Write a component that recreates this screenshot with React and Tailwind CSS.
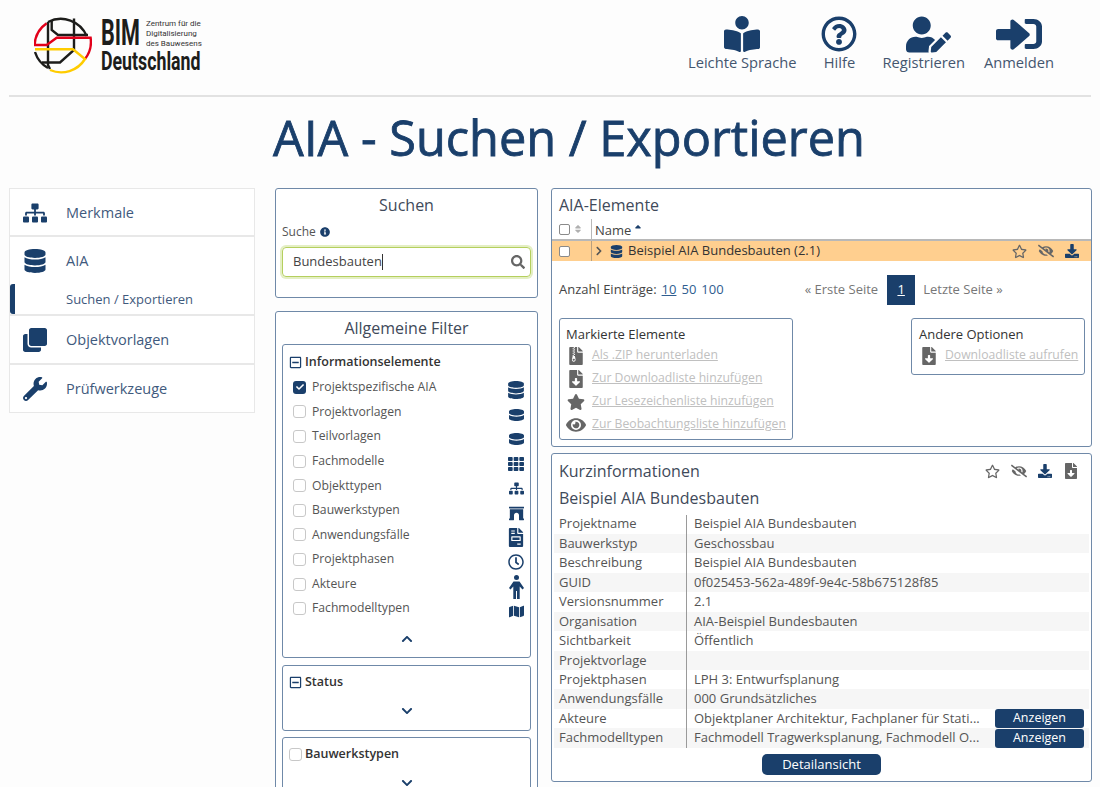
import {
  FaBookReader, FaRegQuestionCircle, FaUserEdit, FaSignInAlt, FaSitemap, FaDatabase, FaClone, FaWrench,
  FaSearch, FaInfoCircle, FaRegStar, FaEyeSlash, FaDownload, FaFileDownload, FaFileArchive, FaStar, FaEye,
  FaTh, FaArchway, FaFileInvoice, FaRegClock, FaMap, FaChevronUp, FaChevronDown, FaChevronRight,
  FaSortUp, FaSort, FaCheck, FaRegMinusSquare,
} from "react-icons/fa";

const navy = "text-[#1a3f6b]";

function ShortDb() {
  return (
    <svg viewBox="0 0 448 352" className={`w-[15px] h-[12px] ${navy}`} fill="currentColor">
      <path d="M448 73.143v45.714C448 159.143 347.667 192 224 192S0 159.143 0 118.857V73.143C0 32.857 100.333 0 224 0s224 32.857 224 73.143zM448 176v102.857C448 319.143 347.667 352 224 352S0 319.143 0 278.857V176c48.125 33.143 136.208 48.572 224 48.572S399.874 209.143 448 176z" />
    </svg>
  );
}

function Person() {
  return (
    <svg viewBox="0 0 15 24" className={`w-[15px] h-[24px] shrink-0 ${navy}`} fill="currentColor">
      <circle cx="7.5" cy="2.5" r="2.5" />
      <path d="M4.5 6.5 L10.5 6.5 L15 13 L13.5 14.5 L10.7 11.5 L10.7 24 L8 24 L8 16 L7 16 L7 24 L4.3 24 L4.3 11.5 L1.5 14.5 L0 13 Z" />
    </svg>
  );
}

function Logo() {
  return (
    <div className="flex items-start">
      <svg width="58" height="58" viewBox="0 0 58 58" fill="none" strokeWidth="2.4" className="shrink-0">
        <path d="M14 5 A28 28 0 0 1 52.7 19" stroke="#1d1d1b" />
        <path d="M14 5 L14 48 L16 52" stroke="#1d1d1b" />
        <path d="M17.7 3 L17.7 13 L24 18 L54 18" stroke="#1d1d1b" />
        <path d="M40 1.5 L40 33 L26 45.5 L8 45.5" stroke="#1d1d1b" />
        <path d="M1 35 A28 28 0 0 0 14 51" stroke="#1d1d1b" />
        <path d="M12.7 6.3 A28 28 0 0 0 0.6 28 L12.7 28 L22.7 20.7 L56.6 20.7 A28 28 0 0 1 51 42" stroke="#e2001a" />
        <path d="M1 32.3 L39 32.3 L51 42 A28 28 0 0 1 16 53" stroke="#ffcc00" />
      </svg>
      <div className="ml-[9px] mt-[1px] text-[#1d1d1b] [font-family:'Roboto',sans-serif]">
        <div className="flex items-start h-[33px]">
          <div className="w-[45px]">
            <span className="inline-block origin-left scale-x-[0.6] text-[36px] leading-[30px] font-bold whitespace-nowrap">BIM</span>
          </div>
          <span className="text-[8px] leading-[10px] text-[#333] whitespace-nowrap pt-[1px]">
            Zentrum für die<br />Digitalisierung<br />des Bauwesens
          </span>
        </div>
        <div className="w-[100px]">
          <span className="inline-block origin-left scale-x-[0.71] text-[25px] leading-[22px] font-bold whitespace-nowrap">Deutschland</span>
        </div>
      </div>
    </div>
  );
}

function TopLink({ icon, label, className = "" }) {
  return (
    <div className={`flex flex-col items-center ${className}`}>
      <div className="h-[36px] flex items-center justify-center">{icon}</div>
      <span className="text-[14.7px] leading-[20px] text-[#44566f] whitespace-nowrap">{label}</span>
    </div>
  );
}

function NavItem({ icon: Icon, label, rowClass = "h-[46px] pt-[2px]", children }) {
  return (
    <div className="border border-[#e8e8e8] bg-white -mt-px first:mt-0 border-b-2 last:border-b">
      <div className={`flex items-center pl-[13px] ${rowClass}`}>
        <span className="w-[24px] flex justify-center"><Icon size={24} className={navy} /></span>
        <span className="ml-[19px] text-[14.5px] text-[#3f5a7d]">{label}</span>
      </div>
      {children}
    </div>
  );
}

function Box({ className = "", children }) {
  return <div className={`border border-[#6f89a8] rounded-[3px] bg-white ${className}`}>{children}</div>;
}

function Check({ checked, small }) {
  if (checked) {
    return (
      <span className="w-[13px] h-[13px] rounded-[3px] bg-[#1a3f6b] flex items-center justify-center shrink-0">
        <FaCheck size={8} className="text-white" />
      </span>
    );
  }
  return <span className={`${small ? "w-[11px] h-[11px] rounded-[2px] border-[#8a8a8a]" : "w-[13px] h-[13px] rounded-[3px] border-[#c8c8c8]"} border bg-white shrink-0`} />;
}

const filterRows = [
  ["Projektspezifische AIA", <FaDatabase size={18} className={navy} />, true],
  ["Projektvorlagen", <ShortDb />],
  ["Teilvorlagen", <ShortDb />],
  ["Fachmodelle", <FaTh size={16} className={navy} />],
  ["Objekttypen", <FaSitemap size={15} className={navy} />],
  ["Bauwerkstypen", <FaArchway size={15} className={navy} />],
  ["Anwendungsfälle", <FaFileInvoice size={19} className={navy} />],
  ["Projektphasen", <FaRegClock size={16} className={navy} />],
  ["Akteure", <Person />],
  ["Fachmodelltypen", <FaMap size={15} className={navy} />],
];

const infoRows = [
  ["Projektname", "Beispiel AIA Bundesbauten"],
  ["Bauwerkstyp", "Geschossbau"],
  ["Beschreibung", "Beispiel AIA Bundesbauten"],
  ["GUID", "0f025453-562a-489f-9e4c-58b675128f85"],
  ["Versionsnummer", "2.1"],
  ["Organisation", "AIA-Beispiel Bundesbauten"],
  ["Sichtbarkeit", "Öffentlich"],
  ["Projektvorlage", ""],
  ["Projektphasen", "LPH 3: Entwurfsplanung"],
  ["Anwendungsfälle", "000 Grundsätzliches"],
  ["Akteure", "Objektplaner Architektur, Fachplaner für Stati...", true],
  ["Fachmodelltypen", "Fachmodell Tragwerksplanung, Fachmodell O...", true],
];

function DisabledLink({ icon: Icon, label, size = 18 }) {
  return (
    <div className="flex items-center h-[23px]">
      <span className="w-[20px] flex justify-center shrink-0">
        <Icon size={size} className="text-[#666]" />
      </span>
      <span className="ml-[6px] text-[12.2px] underline text-[#c0c0c0] whitespace-nowrap">{label}</span>
    </div>
  );
}

export default function App() {
  return (
    <div className="h-[787px] w-[1100px] overflow-hidden bg-[#fdfdfd] [font-family:'Open_Sans',sans-serif]">
      <header className="mx-[9px] h-[97px] border-b-2 border-[#e2e2e2] flex justify-between">
        <div className="pl-[25px] pt-[17px]">
          <Logo />
        </div>
        <div className="flex items-start pt-[16px] pr-[37px]">
          <TopLink icon={<FaBookReader size={36} className={navy} />} label="Leichte Sprache" />
          <TopLink icon={<FaRegQuestionCircle size={36} className={navy} />} label="Hilfe" className="ml-[25px]" />
          <TopLink icon={<FaUserEdit size={45} className={`${navy} ml-[9px]`} />} label="Registrieren" className="ml-[25px]" />
          <TopLink
            icon={<FaSignInAlt preserveAspectRatio="none" className={`${navy} w-[46px] h-[40px]`} />}
            label="Anmelden"
            className="ml-[19px]"
          />
        </div>
      </header>

      <h1 className="text-center text-[48.7px] leading-[64px] font-medium [-webkit-text-stroke:0.8px_#1a3f6b] text-[#1a3f6b] mt-[8px] ml-[38px] whitespace-nowrap">
        AIA - Suchen / Exportieren
      </h1>

      <div className="flex mt-[19px] pl-[9px] items-start">
        <nav className="w-[246px] shrink-0">
          <NavItem icon={FaSitemap} label="Merkmale" />
          <NavItem icon={FaDatabase} label="AIA">
            <div className="relative h-[31px] flex items-center pl-[56px] pt-[2px] text-[13px] text-[#3f5a7d]">
              <span className="absolute left-0 top-[1px] bottom-0 w-[5px] rounded-l-[3px] bg-[#1a3f6b]" />
              Suchen / Exportieren
            </div>
          </NavItem>
          <NavItem icon={FaClone} label="Objektvorlagen" rowClass="h-[47px]" />
          <NavItem icon={FaWrench} label="Prüfwerkzeuge" rowClass="h-[47px]" />
        </nav>

        <section className="w-[263px] ml-[20px] shrink-0 flex flex-col gap-[13px]">
          <Box className="h-[110px] px-[6px]">
            <div className="text-center text-[16px] leading-[22px] mt-[5px] text-[#3f4a5a]">Suchen</div>
            <div className="flex items-center gap-[4px] text-[12px] leading-[17px] mt-[7px] text-[#555]">
              Suche <FaInfoCircle size={10} className={navy} />
            </div>
            <div className="mt-[7px] h-[30px] rounded-[4px] border border-[#b5cf5e] ring-[2px] ring-[#e4efc4] flex items-center justify-between pl-[10px] pr-[5px] text-[13px] text-[#444]">
              <span className="flex items-center">Bundesbauten<span className="w-px h-[16px] bg-[#333]" /></span>
              <FaSearch size={14} className="text-[#666]" />
            </div>
          </Box>

          <Box className="px-[6px] pb-[7px] h-[500px]">
            <div className="text-center text-[16px] leading-[22px] mt-[5px] text-[#3f4a5a]">Allgemeine Filter</div>
            <Box className="mt-[5px] h-[314px] pt-[7px]">
              <div className="flex items-center pl-[6px] gap-[3px] h-[20px] text-[12.5px] font-semibold text-[#333]">
                <FaRegMinusSquare size={13} className={navy} />
                Informationselemente
              </div>
              <div className="mt-[3px]">
                {filterRows.map(([label, icon, checked]) => (
                  <div key={label} className="flex items-center h-[24.6px] pl-[10px] pr-[6px]">
                    <Check checked={checked} />
                    <span className="ml-[6px] text-[12.2px] text-[#555] flex-1">{label}</span>
                    <span className="w-[16px] h-[16px] mt-[6px] flex items-center justify-center">{icon}</span>
                  </div>
                ))}
              </div>
              <div className="flex justify-center mt-[12px]">
                <FaChevronUp size={12} className={navy} />
              </div>
            </Box>
            <Box className="mt-[7px] h-[66px] pt-[6px]">
              <div className="flex items-center pl-[6px] gap-[3px] h-[20px] text-[12.5px] font-semibold text-[#333]">
                <FaRegMinusSquare size={13} className={navy} />
                Status
              </div>
              <div className="flex justify-center mt-[13px]">
                <FaChevronDown size={12} className={navy} />
              </div>
            </Box>
            <Box className="mt-[6px] h-[66px] pt-[6px]">
              <div className="flex items-center pl-[6px] gap-[3px] h-[20px] text-[12.5px] font-semibold text-[#333]">
                <Check />
                Bauwerkstypen
              </div>
              <div className="flex justify-center mt-[13px]">
                <FaChevronDown size={12} className={navy} />
              </div>
            </Box>
          </Box>
        </section>

        <section className="w-[541px] ml-[13px] shrink-0 flex flex-col gap-[6px]">
          <Box className="h-[259px]">
            <div className="text-[16px] leading-[22px] mt-[5px] pl-[7px] text-[#3f4a5a]">AIA-Elemente</div>
            <div className="flex h-[22px] mt-[3px] items-center border-b-2 border-[#b8b8b8] text-[13px] text-[#444]">
              <div className="w-[40px] h-full pl-[7px] flex items-center gap-[3px] border-r border-[#b8b8b8]">
                <Check small />
                <FaSort size={10} className="text-[#b0b0b0]" />
              </div>
              <span className="ml-[3px] pt-[3px]">Name</span>
              <FaSortUp size={10} className={`${navy} ml-[2px]`} />
            </div>
            <div className="flex h-[20px] items-center bg-[#ffcf8f] text-[13px] text-[#333]">
              <div className="w-[40px] h-full pl-[7px] flex items-center border-r border-[#b8a080]">
                <Check small />
              </div>
              <FaChevronRight size={10} className="ml-[2px] text-[#555]" />
              <FaDatabase size={13} className={`${navy} ml-[6px]`} />
              <span className="ml-[5px] flex-1">Beispiel AIA Bundesbauten (2.1)</span>
              <div className="flex items-center gap-[11px] pr-[12px]">
                <FaRegStar size={15} className="text-[#666]" />
                <FaEyeSlash size={16} className="text-[#666]" />
                <FaDownload size={14} className={navy} />
              </div>
            </div>
            <div className="flex items-center h-[30px] mt-[14px] pl-[7px] text-[13px]">
              <span className="text-[#444]">Anzahl Einträge:</span>
              <span className="ml-[5px] underline text-[#2f5d8f]">10</span>
              <span className="ml-[5px] text-[#2f5d8f]">50</span>
              <span className="ml-[5px] text-[#2f5d8f]">100</span>
              <span className="ml-[81px] text-[#777]">« Erste Seite</span>
              <span className="ml-[9px] w-[28px] h-[30px] bg-[#1a3f6b] text-white underline flex items-center justify-center">1</span>
              <span className="ml-[8px] text-[#777]">Letzte Seite »</span>
            </div>
            <div className="flex justify-between items-start pl-[7px] pr-[6px] mt-[13px]">
              <Box className="w-[234px] h-[122px] pl-[6px] pt-[6px]">
                <div className="text-[13px] leading-[18px] text-[#333] mb-[1px]">Markierte Elemente</div>
                <DisabledLink icon={FaFileArchive} label="Als .ZIP herunterladen" />
                <DisabledLink icon={FaFileDownload} label="Zur Downloadliste hinzufügen" />
                <DisabledLink icon={FaStar} label="Zur Lesezeichenliste hinzufügen" />
                <DisabledLink icon={FaEye} label="Zur Beobachtungsliste hinzufügen" size={20} />
              </Box>
              <Box className="w-[174px] h-[57px] pl-[7px] pt-[6px]">
                <div className="text-[13px] leading-[18px] text-[#333] mb-[1px]">Andere Optionen</div>
                <DisabledLink icon={FaFileDownload} label="Downloadliste aufrufen" />
              </Box>
            </div>
          </Box>

          <Box className="h-[329px]">
            <div className="flex justify-between items-center h-[22px] mt-[6px] px-[7px]">
              <span className="text-[16px] text-[#3f4a5a]">Kurzinformationen</span>
              <div className="flex items-center gap-[11px] pr-[5px]">
                <FaRegStar size={15} className="text-[#666]" />
                <FaEyeSlash size={16} className="text-[#666]" />
                <FaDownload size={14} className={navy} />
                <FaFileDownload size={16} className="text-[#666]" />
              </div>
            </div>
            <div className="text-[16px] leading-[22px] mt-[5px] pl-[7px] text-[#3f4a5a]">Beispiel AIA Bundesbauten</div>
            <div className="mt-[5.5px] mx-[2px]">
              {infoRows.map(([label, value, btn], i) => (
                <div key={label} className={`flex items-center h-[19.45px] text-[13px] text-[#555] ${i % 2 === 1 ? "bg-[#f6f6f6]" : ""}`}>
                  <span className="w-[133px] h-full pl-[5px] flex items-center border-r border-[#9a9a9a] shrink-0">{label}</span>
                  <span className="ml-[7px] flex-1 whitespace-nowrap">{value}</span>
                  {btn && (
                    <span className="w-[89px] h-[19px] mr-[5px] rounded-[3px] bg-[#1a3f6b] text-white text-[12.5px] flex items-center justify-center">Anzeigen</span>
                  )}
                </div>
              ))}
            </div>
            <div className="flex justify-center mt-[6.5px]">
              <span className="w-[119px] h-[21px] rounded-[5px] bg-[#1a3f6b] text-white text-[13px] font-medium flex items-center justify-center">Detailansicht</span>
            </div>
          </Box>
        </section>
      </div>
    </div>
  );
}
